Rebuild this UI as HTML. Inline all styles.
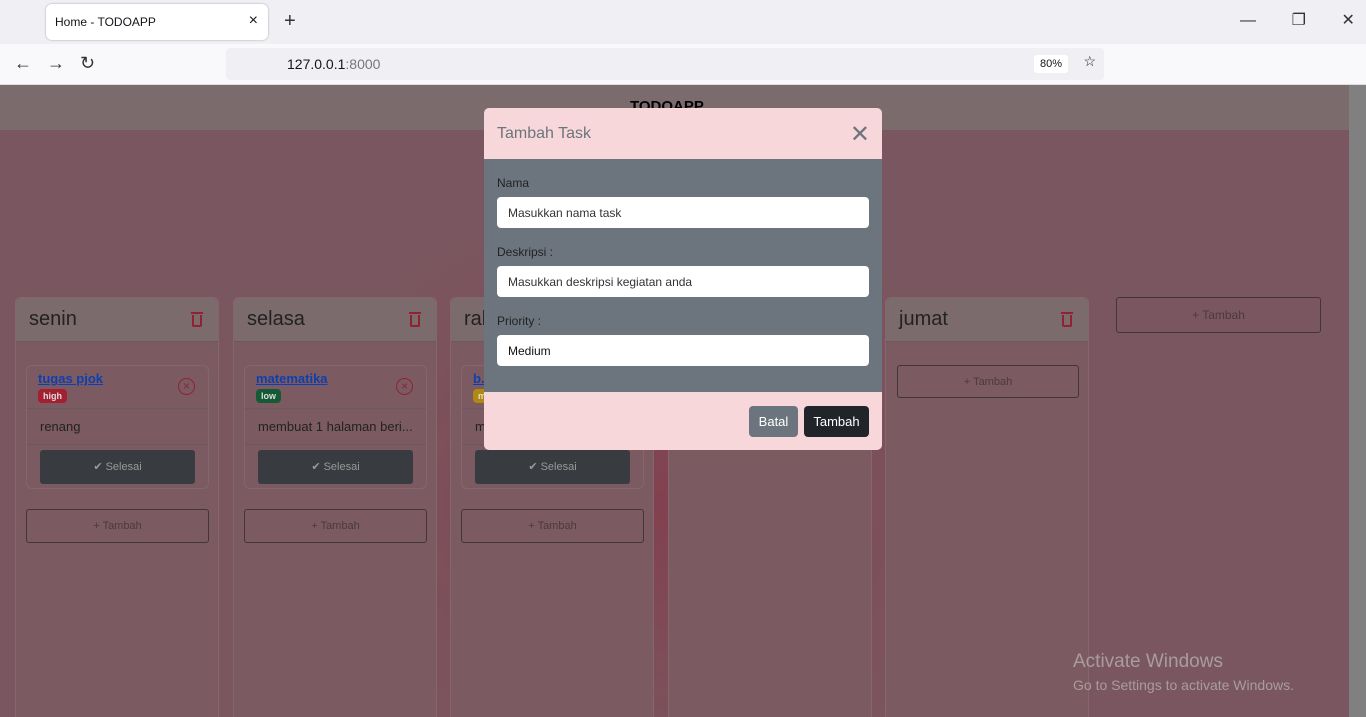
<!DOCTYPE html>
<html><head><meta charset="utf-8"><style>
*{box-sizing:border-box;margin:0;padding:0}
html,body{width:1366px;height:717px;overflow:hidden}
body{font-family:"Liberation Sans",sans-serif;background:#f0f0f4;position:relative}
.tabbar{position:absolute;top:0;left:0;width:1366px;height:44px;background:#f0f0f4}
.tab{position:absolute;left:46px;top:4px;width:222px;height:36px;background:#fff;border-radius:6px;box-shadow:0 0 2px rgba(0,0,0,.3);font-size:12px;padding:11px 9px;color:#15141a}
.toolbar{position:absolute;top:44px;left:0;width:1366px;height:41px;background:#f9f9fb;border-bottom:1px solid #ddd}
.url{position:absolute;left:226px;top:4px;width:878px;height:32px;background:#f0f0f4;border-radius:4px;font-size:14px;padding:8px 61px;color:#15141a}
.page{position:absolute;top:85px;left:0;width:1349px;height:632px;overflow:hidden;background:radial-gradient(ellipse 380px 320px at 650px 420px,#82404f 0%,#7d4f5a 55%,#7a5760 100%)}
.scroll{position:absolute;top:85px;left:1349px;width:17px;height:632px;background:#808080}
.nav{position:absolute;top:0;left:0;width:1349px;height:45px;background:#7c6b6d}
.col{position:absolute;top:212px;width:204px;height:440px;background:#7b5a62;border:1px solid #86666e;border-radius:6px}
.colh{height:44px;background:#7c6b6d;border-bottom:1px solid #6a5a5e;border-radius:6px 6px 0 0;font-size:20px;color:#222;padding:10px 13px;position:relative}
.trash{position:absolute;right:16px;top:17px;width:10px;height:12px;border:2px solid #8f2334;border-top:none;border-radius:0 0 2px 2px}
.trash:before{content:"";position:absolute;left:-3px;top:-3px;width:12px;height:2px;background:#8f2334}
.card{position:absolute;left:10px;top:67px;width:183px;height:124px;border:1px solid #86666e;border-radius:6px}
.ct{height:43px;border-bottom:1px solid #6a5a5e;padding:5px 11px;position:relative}
.ct a{color:#0d3fb0;font-weight:bold;text-decoration:underline;font-size:13px;display:block}
.badge{display:inline-block;font-size:9px;font-weight:bold;color:#ddd;padding:2px 5px;border-radius:4px;margin-top:1px}
.x{position:absolute;right:13px;top:12px;width:17px;height:17px;border:1.5px solid #8f2334;border-radius:50%;color:#8f2334;font-size:12px;text-align:center;line-height:14px}
.cd{height:36px;border-bottom:1px solid #6a5a5e;padding:10px 13px;font-size:13px;color:#222}
.sel{margin:5px 13px;height:34px;background:#383c40;border-radius:3px;color:#999;font-size:11px;text-align:center;line-height:34px}
.add{position:absolute;height:34px;border:1px solid #40363a;border-radius:3px;color:#4a3a3e;font-size:11px;text-align:center;line-height:32px}
.modal{position:absolute;left:484px;top:108px;width:398px;height:342px;border-radius:5px;overflow:hidden;background:#6c757d}
.mh{height:51px;background:#f8d7da;padding:17px 13px;font-size:16px;color:#6c757d;position:relative}
.mb{padding:17px 13px 0;font-size:12px;color:#222;height:233px;line-height:14px}
.inp{height:31px;background:#fff;border-radius:4px;margin:7px 0 17px;padding:9px 11px;font-size:12px;color:#333}
.mf{height:58px;background:#f8d7da;position:relative}
.btn{position:absolute;top:14px;height:31px;border-radius:4px;color:#fff;font-size:13px;line-height:31px;text-align:center}
</style></head><body>
<div class="tabbar"><div class="tab">Home - TODOAPP<span style="position:absolute;right:10px;top:8px;font-size:16px">×</span></div>
<span style="position:absolute;left:284px;top:10px;font-size:20px;color:#333">+</span>
<span style="position:absolute;left:1240px;top:10px;font-size:16px;color:#333">—&nbsp;&nbsp;&nbsp;&nbsp;&nbsp;&nbsp;&nbsp;&nbsp;❐&nbsp;&nbsp;&nbsp;&nbsp;&nbsp;&nbsp;&nbsp;&nbsp;✕</span></div>
<div class="toolbar"><span style="position:absolute;left:14px;top:9px;font-size:18px;color:#333">←&nbsp;&nbsp;&nbsp;→&nbsp;&nbsp;&nbsp;↻</span>
<div class="url">127.0.0.1<span style="color:#777">:8000</span><span style="position:absolute;right:36px;top:7px;background:#fff;font-size:11px;padding:3px 6px;border-radius:3px">80%</span><span style="position:absolute;right:8px;top:5px">☆</span></div></div>
<div class="page">
<div class="nav"><div style="position:absolute;left:630px;top:13px;font-weight:bold;font-size:15px;color:#000">TODOAPP</div></div>
<div class="col" style="left:15px"><div class="colh">senin<span class="trash"></span></div>
<div class="card"><div class="ct"><a>tugas pjok</a><span class="badge" style="background:#a41f30">high</span><span class="x">×</span></div><div class="cd">renang</div><div class="sel">✔ Selesai</div></div>
<div class="add" style="left:10px;top:211px;width:183px">+ Tambah</div></div>
<div class="col" style="left:233px"><div class="colh">selasa<span class="trash"></span></div>
<div class="card"><div class="ct"><a>matematika</a><span class="badge" style="background:#145a34">low</span><span class="x">×</span></div><div class="cd">membuat 1 halaman beri...</div><div class="sel">✔ Selesai</div></div>
<div class="add" style="left:10px;top:211px;width:183px">+ Tambah</div></div>
<div class="col" style="left:450px"><div class="colh">rabu<span class="trash"></span></div>
<div class="card"><div class="ct"><a>b.</a><span class="badge" style="background:#b08a10">med</span></div><div class="cd">m</div><div class="sel">✔ Selesai</div></div>
<div class="add" style="left:10px;top:211px;width:183px">+ Tambah</div></div>
<div class="col" style="left:668px"><div class="colh">kamis</div></div>
<div class="col" style="left:885px"><div class="colh">jumat<span class="trash"></span></div>
<div class="add" style="left:11px;top:67px;width:182px;height:33px">+ Tambah</div></div>
<div class="add" style="left:1116px;top:212px;width:205px;height:36px;line-height:34px;font-size:12px">+ Tambah</div>
<div style="position:absolute;left:1073px;top:566px;color:#a89ca0;font-size:19px">Activate Windows</div>
<div style="position:absolute;left:1073px;top:592px;color:#a89ca0;font-size:14px">Go to Settings to activate Windows.</div>
</div>
<div class="scroll"></div>
<div class="modal">
<div class="mh">Tambah Task<span style="position:absolute;right:12px;top:12px;font-size:24px;color:#6c757d">✕</span></div>
<div class="mb">Nama<div class="inp">Masukkan nama task</div>Deskripsi :<div class="inp">Masukkan deskripsi kegiatan anda</div>Priority :<div class="inp" style="color:#111">Medium</div></div>
<div class="mf"><div class="btn" style="left:265px;width:49px;background:#6c757d">Batal</div><div class="btn" style="left:320px;width:65px;background:#212529">Tambah</div></div>
</div>
</body></html>
